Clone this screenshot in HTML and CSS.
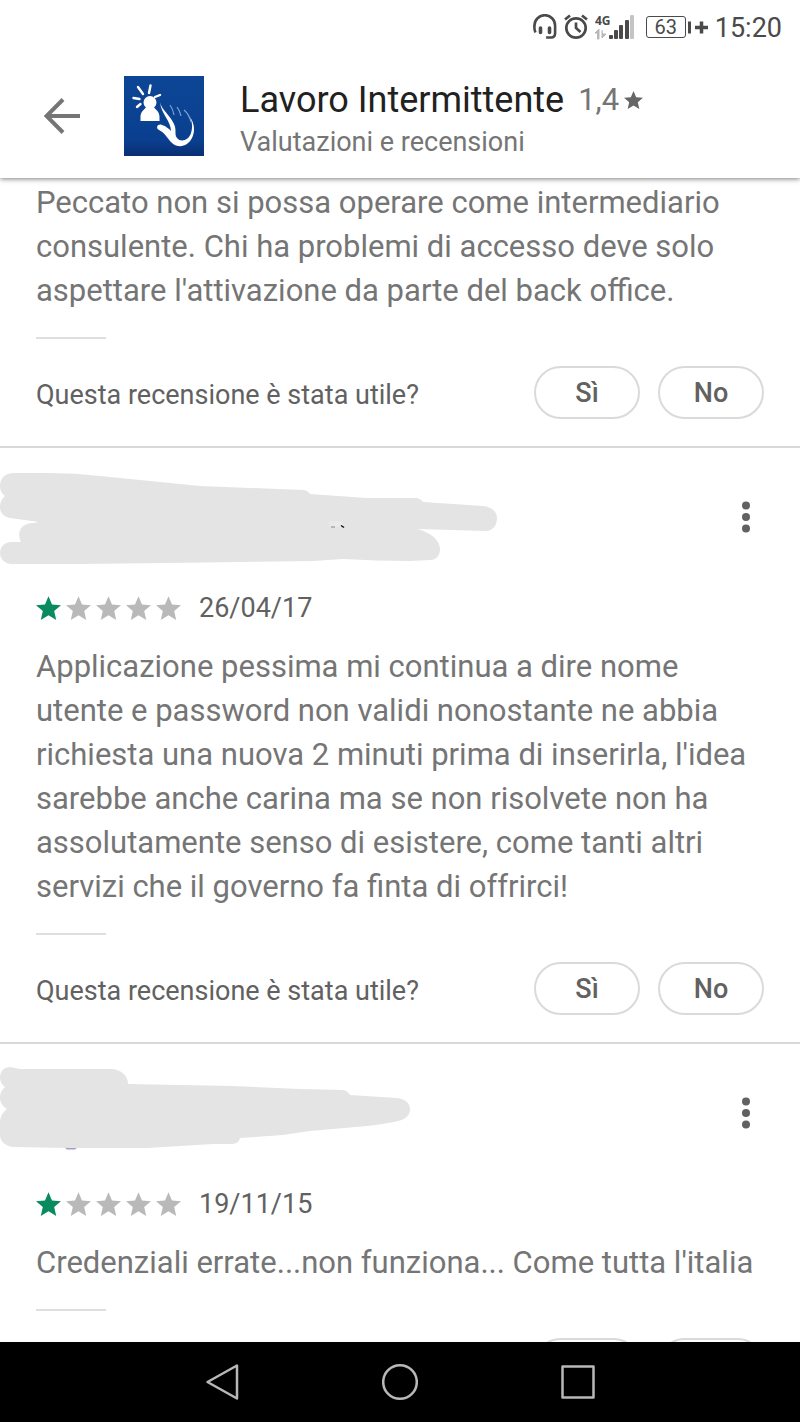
FILE: index.html
```html
<!DOCTYPE html>
<html lang="it">
<head>
    <meta charset="UTF-8">
    <meta name="viewport" content="width=device-width, initial-scale=1.0">
    <title>Lavoro Intermittente - Valutazioni e recensioni</title>
    <link rel="stylesheet" href="styles.css">
</head>
<body>
    <svg class="symbols" width="0" height="0" aria-hidden="true">
        <symbol id="star" viewBox="2 2 20 19">
            <path d="M12 17.270L18.180 21l-1.640-7.030L22 9.240l-7.190-.610L12 2 9.190 8.630 2 9.240l5.460 4.730L5.820 21z"/>
        </symbol>
        <symbol id="dots" viewBox="0 0 8 32">
            <circle cx="4" cy="4.500" r="4"/>
            <circle cx="4" cy="16" r="4"/>
            <circle cx="4" cy="27.500" r="4"/>
        </symbol>
    </svg>

    <header class="top">
        <div class="status-bar">
            <svg class="headset" width="24" height="26" viewBox="0 0 24 26">
                <path d="M2.500 18.500C1.300 16 1.300 13 1.500 11.500a10.300 10.300 0 0 1 20.600 0V19c0 3-1.500 4.500-4 4.500h-5" fill="none" stroke="#4a4a4a" stroke-width="2.600"/>
                <path d="M7.500 14v4.500M16.500 14v4.500" stroke="#4a4a4a" stroke-width="3.600" stroke-linecap="round"/>
            </svg>
            <svg class="alarm" width="24" height="26" viewBox="0 0 24 26">
                <g fill="none" stroke="#4a4a4a" stroke-width="2.700">
                    <circle cx="12" cy="14" r="9.700"/>
                    <path d="M1 5.500l5-4M23 5.500l-5-4M12 8.500V14l4.500 4"/>
                </g>
            </svg>
            <svg class="signal" width="40" height="28" viewBox="0 0 40 28">
                <text class="network" x="0" y="12">4G</text>
                <g fill="#4a4a4a">
                    <rect x="14" y="22" width="4" height="4" rx="1"/>
                    <rect x="19" y="17" width="4" height="9" rx="1"/>
                    <rect x="24" y="12" width="4" height="14" rx="1"/>
                    <rect x="30" y="7" width="4" height="19" rx="1"/>
                </g>
                <rect x="35" y="2" width="4" height="24" rx="1" fill="#c4c4c4"/>
                <path d="M2.500 26v-6H0l4-4v10zM7 17v8l4-4H8" fill="#b8b8b8" stroke="#b8b8b8"/>
            </svg>
            <div class="battery">
                <span class="level">63</span>
                <svg width="22" height="21" viewBox="0 0 22 21">
                    <path d="M3.500 4.500v12" stroke="#4a4a4a" stroke-width="3"/>
                    <path d="M9 10.500h13M15.500 4.500v12" stroke="#4a4a4a" stroke-width="3.500"/>
                </svg>
            </div>
            <span class="clock">15:20</span>
        </div>
        <div class="app-bar">
            <button class="icon-btn back" type="button" aria-label="Indietro">
                <svg width="36" height="36" viewBox="0 0 36 36">
                    <path d="M19 1.500L2.500 18 19 34.500M3 18h33" fill="none" stroke="#757575" stroke-width="4"/>
                </svg>
            </button>
            <svg class="app-icon" viewBox="0 0 80 80">
                <defs>
                    <linearGradient id="blue" x1="0" y1="0" x2="0" y2="1">
                        <stop offset="0" stop-color="#0d4696"/>
                        <stop offset="0.800" stop-color="#0a3f8f"/>
                        <stop offset="1" stop-color="#0a2f72"/>
                    </linearGradient>
                </defs>
                <rect width="80" height="80" fill="url(#blue)"/>
                <g fill="#fff">
                    <circle cx="26" cy="26.500" r="6.500"/>
                    <path d="M16.500 45v-4c0-5 3-7 6-10h7c3 3 6 5 6 10v4z"/>
                    <path d="M36 26C37 33 46 39 50 48C53 54 50 58 53 62C57 67 65 64 67 57C69 51 68 46 66 41C71 48 71 56 68 62C64 70 55 73 48 67C43 62 41 57 35 54C31 52 34 47 38 49C42 50 45 53 47 55C47 45 37 38 36 26Z"/>
                </g>
                <path d="M14 11l5 7M26.500 9.500L25 17M9.500 22l6 1M13 31l3.500-3M31 21l5-2" stroke="#fff" stroke-width="2.400" stroke-linecap="round"/>
                <path d="M46 29q3 4 4 10M53 31q3 4 4 9M60 34q5 4 7 12" fill="none" stroke="#7fa3d8" stroke-width="1.200"/>
            </svg>
            <div class="titles">
                <div class="title-row">
                    <h1>Lavoro Intermittente</h1>
                    <span class="score">1,4</span>
                    <svg class="score-star"><use href="#star"/></svg>
                </div>
                <p class="subtitle">Valutazioni e recensioni</p>
            </div>
        </div>
    </header>

    <main class="reviews">
        <article class="review">
            <p class="review-text">Peccato non si possa operare come intermediario consulente. Chi ha problemi di accesso deve solo aspettare l'attivazione da parte del back office.</p>
            <hr class="short-rule">
            <div class="feedback">
                <span class="question">Questa recensione è stata utile?</span>
                <button class="pill" type="button">Sì</button>
                <button class="pill" type="button">No</button>
            </div>
        </article>

        <article class="review">
            <div class="review-head">
                <svg class="author" width="500" height="138" viewBox="0 0 500 138">
                    <path d="M0 39C0 30 5 25 14 25H50Q75 25 100 28L200 38 303 42Q307 42 310 46L367 50H417Q421 51 423 54L483 58C492 59 497 64 497 70C497 78 492 83 486 83L417 81C430 84 440 92 440 101C440 107 437 112 430 112L410 113Q377 113 343 111L313 113 167 115 77 116H12C5 116 0 111 0 105C0 99 4 94 12 94H21C17 86 19 75 34 75L39 74 10 70C4 69 0 65 0 59Q0 52 5 48Q0 44 0 39Z" fill="#e4e4e4"/>
                    <path d="M329 73h13v6h-13z" fill="#e9e9e9"/>
                    <path d="M331 79h4" stroke="#888" stroke-width="1"/>
                    <path d="M341 77.500l3 2" stroke="#111" stroke-width="1.500"/>
                </svg>
                <button class="icon-btn more" type="button" aria-label="Altro">
                    <svg width="8" height="32"><use href="#dots"/></svg>
                </button>
            </div>
            <div class="rating">
                <svg class="star on"><use href="#star"/></svg>
                <svg class="star"><use href="#star"/></svg>
                <svg class="star"><use href="#star"/></svg>
                <svg class="star"><use href="#star"/></svg>
                <svg class="star"><use href="#star"/></svg>
                <time class="date" datetime="2017-04-26">26/04/17</time>
            </div>
            <p class="review-text">Applicazione pessima mi continua a dire nome utente e password non validi nonostante ne abbia richiesta una nuova 2 minuti prima di inserirla, l'idea sarebbe anche carina ma se non risolvete non ha assolutamente senso di esistere, come tanti altri servizi che il governo fa finta di offrirci!</p>
            <hr class="short-rule">
            <div class="feedback">
                <span class="question">Questa recensione è stata utile?</span>
                <button class="pill" type="button">Sì</button>
                <button class="pill" type="button">No</button>
            </div>
        </article>

        <article class="review">
            <div class="review-head">
                <svg class="author" width="500" height="138" viewBox="0 0 500 138">
                    <path d="M64 103h14l-3 2.500h-8z" fill="#a79fc4"/>
                    <path d="M0 34C0 27 4 23 10 23L20 25H93L112 25C122 26 128 32 128 40L233 42 300 45 343 46Q348 47 350 51L397 54C406 55 410 60 410 65C410 71 406 75 398 77Q385 80 367 82L310 87 283 91 240 94Q239 99 233 100H213L147 104H70L13 103C5 102 0 97 0 91V77Q1 69 7 65Q0 61 0 54Q0 47 5 43Q0 39 0 34Z" fill="#e4e4e4"/>
                </svg>
                <button class="icon-btn more" type="button" aria-label="Altro">
                    <svg width="8" height="32"><use href="#dots"/></svg>
                </button>
            </div>
            <div class="rating">
                <svg class="star on"><use href="#star"/></svg>
                <svg class="star"><use href="#star"/></svg>
                <svg class="star"><use href="#star"/></svg>
                <svg class="star"><use href="#star"/></svg>
                <svg class="star"><use href="#star"/></svg>
                <time class="date" datetime="2015-11-19">19/11/15</time>
            </div>
            <p class="review-text">Credenziali errate...non funziona... Come tutta l'italia</p>
            <hr class="short-rule">
            <div class="feedback">
                <span class="question"></span>
                <button class="pill" type="button" aria-label="Sì"></button>
                <button class="pill" type="button" aria-label="No"></button>
            </div>
        </article>
    </main>

    <nav class="nav-bar">
        <button class="icon-btn" type="button" aria-label="Indietro">
            <svg width="36" height="40" viewBox="0 0 36 40"><path d="M33 3.500v33L3.500 20z"/></svg>
        </button>
        <button class="icon-btn" type="button" aria-label="Home">
            <svg width="36" height="40" viewBox="0 0 36 40"><circle cx="18" cy="20" r="16.800"/></svg>
        </button>
        <button class="icon-btn" type="button" aria-label="Recenti">
            <svg width="36" height="40" viewBox="0 0 36 40"><rect x="2.500" y="4.500" width="31" height="31"/></svg>
        </button>
    </nav>
</body>
</html>
```
FILE: styles.css
```css
* {
    box-sizing: border-box;
}
body {
    font-family: Roboto, Arial, sans-serif;
    background-color: #fff;
    color: #757575;
    margin: 0;
    display: flex;
    flex-direction: column;
    height: 100vh;
    overflow: hidden;
}
h1,
p {
    margin: 0;
    font-weight: 400;
}
svg {
    display: block;
    flex-shrink: 0;
}
.symbols {
    position: absolute;
}
.icon-btn {
    display: flex;
    align-items: center;
    justify-content: center;
    padding: 0;
    border: none;
    background: none;
    cursor: pointer;
}

/* Header */
.top {
    position: relative;
    z-index: 1;
    flex-shrink: 0;
    background-color: #fff;
    box-shadow: 0 1px 5px rgba(0, 0, 0, 0.5);
}
.status-bar {
    display: flex;
    align-items: center;
    justify-content: flex-end;
    gap: 7px;
    height: 54px;
    padding-right: 18px;
    color: #4a4a4a;
}
.network {
    font-family: "Open Sans", sans-serif;
    font-size: 12px;
    font-weight: 700;
    fill: #4a4a4a;
}
.battery {
    display: flex;
    align-items: center;
    margin-left: 4px;
}
.level {
    width: 40px;
    height: 22px;
    border: 1px solid #4a4a4a;
    border-radius: 3px;
    font-size: 20px;
    line-height: 20px;
    text-align: center;
}
.clock {
    padding-top: 2px;
    font-size: 27px;
    line-height: 32px;
}
.app-bar {
    display: flex;
    align-items: center;
    height: 124px;
    padding: 0 36px;
}
.back {
    width: 52px;
    height: 52px;
}
.app-icon {
    width: 80px;
    height: 80px;
    margin: 0 36px;
}
.titles {
    padding-top: 8px;
}
.title-row {
    display: flex;
    align-items: center;
}
h1 {
    font-size: 36px;
    line-height: 44px;
    color: #212121;
}
.score {
    margin-left: 14px;
    font-size: 31px;
    line-height: 44px;
}
.score-star {
    width: 19px;
    height: 18px;
    margin-left: 5px;
    fill: #666;
}
.subtitle {
    font-size: 27px;
    line-height: 40px;
}

/* Reviews */
.reviews {
    flex: 1;
    min-height: 0;
    padding-top: 2px;
    overflow: hidden;
}
.review {
    padding: 0 36px 27px;
    border-bottom: 2px solid #d8d8d8;
}
.review-head {
    display: flex;
    align-items: center;
    justify-content: space-between;
    margin: 0 0 6px -36px;
}
.more {
    width: 36px;
    height: 48px;
    fill: #616161;
}
.rating {
    display: flex;
    align-items: center;
    gap: 5px;
    height: 32px;
    margin-bottom: 20px;
}
.star {
    width: 25px;
    height: 24px;
    fill: #b9b9b9;
}
.star.on {
    fill: #098a5f;
}
.date {
    margin-left: 13px;
    font-size: 27px;
    color: #616161;
}
.review-text {
    padding-top: 1px;
    font-size: 31px;
    line-height: 44px;
}
.short-rule {
    width: 70px;
    height: 2px;
    margin: 24px 0 27px;
    border: none;
    background-color: #dedede;
}
.feedback {
    display: flex;
    align-items: center;
    gap: 18px;
}
.question {
    flex: 1;
    padding-top: 4px;
    font-size: 27px;
    color: #616161;
}
.pill {
    width: 106px;
    height: 53px;
    padding: 0;
    border: 2px solid #dadada;
    border-radius: 27px;
    background-color: #fff;
    font-family: inherit;
    font-size: 27px;
    font-weight: 500;
    color: #616161;
    cursor: pointer;
}

/* Navigation */
.nav-bar {
    display: flex;
    align-items: center;
    justify-content: center;
    gap: 142px;
    flex-shrink: 0;
    height: 80px;
    background-color: #000;
}
.nav-bar svg {
    fill: none;
    stroke: #b8b8b8;
    stroke-width: 2.5;
    stroke-linejoin: round;
}
```
